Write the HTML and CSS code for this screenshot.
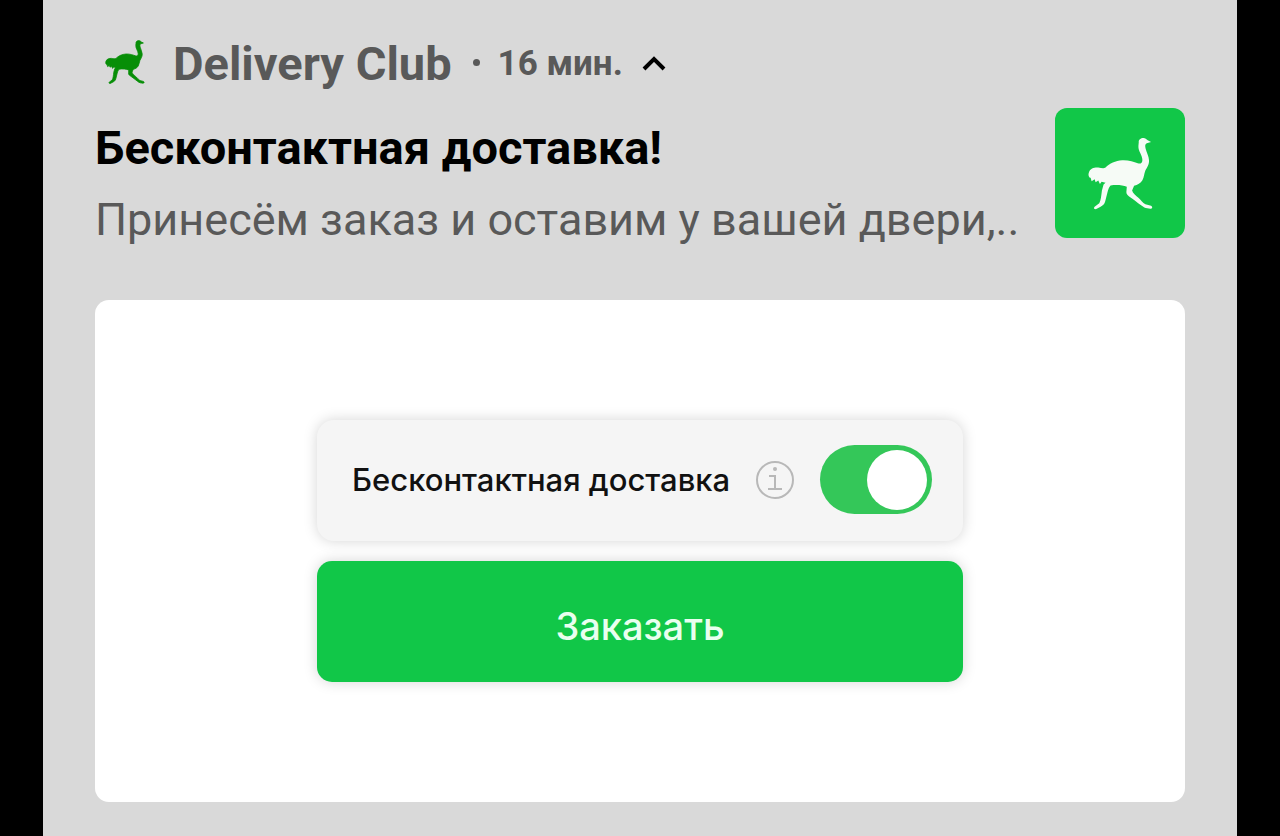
FILE: index.html
```html
<!DOCTYPE html>
<html lang="ru">
<head>
<meta charset="utf-8">
<title>Delivery Club</title>
<link rel="stylesheet" href="styles.css">
</head>
<body>
<svg class="symbols" aria-hidden="true">
  <symbol id="ostrich" viewBox="125 115 200 220">
    <path d="M280 131C279 123 286 118 294 118C300 118 303 122 307 125L317 130L304 134C298 137 299 143 301 151C304 163 310 172 311 185C312 198 304 208 300 216C296 225 296 237 291 245C286 254 276 259 266 262L260 276C262 284 271 291 278 297C286 304 292 313 300 318L317 322C323 325 321 331 315 331L301 329C295 328 292 324 287 321C276 313 262 301 251 294C243 289 242 283 243 277L244 265C232 260 213 258 195 261C190 267 188 273 186 281L179 309C177 318 171 322 165 325L152 332C146 334 143 329 147 325L161 315C166 306 167 291 169 276L174 258L180 253L168 250L163 257L158 246L150 251L147 242L138 248L135 238C129 237 127 228 130 221C134 210 146 206 158 207C167 208 174 211 180 207C192 195 210 186 230 185C249 184 265 190 277 194C285 197 291 193 291 184C291 169 278 158 279 142Z"/>
  </symbol>
</svg>
<main class="notification">
  <header class="source">
    <svg class="source-icon" aria-hidden="true"><use href="#ostrich"/></svg>
    <span class="app-name">Delivery Club</span>
    <span class="dot" aria-hidden="true"></span>
    <span class="time">16 мин.</span>
    <button class="collapse" type="button" aria-label="Свернуть">
      <svg viewBox="0 0 24 16" aria-hidden="true"><path d="M2 13L12 3L22 13"/></svg>
    </button>
  </header>
  <section class="message">
    <div class="message-text">
      <h1 class="title">Бесконтактная доставка!</h1>
      <p class="summary">Принесём заказ и оставим у вашей двери,..</p>
    </div>
    <div class="app-tile"><svg aria-hidden="true"><use href="#ostrich"/></svg></div>
  </section>
  <section class="card">
    <div class="order">
      <div class="option">
        <label class="option-label" for="contactless">Бесконтактная доставка</label>
        <button class="info" type="button" aria-label="Подробнее">
          <svg viewBox="0 0 40 40" aria-hidden="true">
            <circle class="info-line" cx="20" cy="20" r="18"/>
            <path class="info-line" d="M14 16H20V29M13 29H27"/>
            <circle class="info-dot" cx="20" cy="9" r="2"/>
          </svg>
        </button>
        <input class="switch" id="contactless" type="checkbox" role="switch" checked>
      </div>
      <button class="submit" type="button">Заказать</button>
    </div>
  </section>
</main>
</body>
</html>
```
FILE: styles.css
```css
* {
  box-sizing: border-box;
}

body {
  margin: 0;
  padding: 0 43px;
  background: #000;
  font-family: Roboto, "Liberation Sans", sans-serif;
}

button {
  padding: 0;
  border: 0;
  background: none;
  font: inherit;
  cursor: pointer;
}

.symbols {
  position: absolute;
  width: 0;
  height: 0;
}

.notification {
  min-height: 100vh;
  padding: 36px 52px 34px;
  background: #d9d9d9;
}

.source {
  display: flex;
  align-items: center;
  height: 56px;
  color: #595959;
  font-weight: 700;
}

.source-icon {
  width: 40px;
  height: 44px;
  margin: 0 28px 4px 10px;
  fill: #078e07;
  stroke: #078e07;
  stroke-width: 4;
}

.app-name {
  font-size: 47px;
  line-height: 56px;
}

.dot {
  width: 7px;
  height: 7px;
  margin: 0 18px 4px 21px;
  border-radius: 50%;
  background: #595959;
}

.time {
  font-size: 35px;
  line-height: 40px;
}

.collapse {
  display: flex;
  margin-left: 19px;
}

.collapse svg {
  width: 24px;
  height: 16px;
  fill: none;
  stroke: #000;
  stroke-width: 4;
}

.message {
  display: flex;
  justify-content: space-between;
  align-items: flex-start;
  padding-top: 16px;
}

.title {
  margin: 12px 0 16px;
  font-size: 47px;
  line-height: 56px;
  font-weight: 700;
}

.summary {
  margin: 0;
  color: #595959;
  font-size: 45px;
  line-height: 56px;
}

.app-tile {
  display: flex;
  flex: none;
  justify-content: center;
  align-items: center;
  width: 130px;
  height: 130px;
  border-radius: 12px;
  background: #11c748;
}

.app-tile svg {
  width: 67px;
  height: 73px;
  fill: #f6fbf6;
}

.card {
  margin-top: 52px;
  padding: 120px 24px;
  border-radius: 14px;
  background: #fff;
}

.order {
  display: grid;
  gap: 20px;
  max-width: 646px;
  margin: 0 auto;
  font-family: Inter, "Liberation Sans", sans-serif;
}

.option {
  display: flex;
  align-items: center;
  height: 121px;
  padding: 0 31px 2px 35px;
  border-radius: 17px;
  background: #f5f5f5;
  box-shadow: 0 0 14px rgba(0, 0, 0, 0.17);
}

.option-label {
  color: #111;
  font-size: 31px;
  line-height: 40px;
  font-weight: 500;
}

.info {
  display: flex;
  margin-left: auto;
}

.info svg {
  width: 40px;
  height: 40px;
}

.info-line {
  fill: none;
  stroke: #b8b8b8;
  stroke-width: 2;
}

.info-dot {
  fill: #b8b8b8;
}

.switch {
  display: flex;
  align-items: center;
  flex: none;
  width: 112px;
  height: 69px;
  margin: 0 0 0 25px;
  padding: 5px;
  border-radius: 35px;
  background: #bcbcbc;
  appearance: none;
  cursor: pointer;
}

.switch::before {
  content: "";
  width: 60px;
  height: 60px;
  border-radius: 50%;
  background: #fff;
}

.switch:checked {
  justify-content: flex-end;
  background: #34c759;
}

.submit {
  height: 121px;
  border-radius: 15px;
  background: #11c748;
  box-shadow: 0 0 14px rgba(0, 0, 0, 0.17);
  color: #e9ffef;
  font-size: 38px;
  font-weight: 500;
  padding-top: 8px;
}
```
